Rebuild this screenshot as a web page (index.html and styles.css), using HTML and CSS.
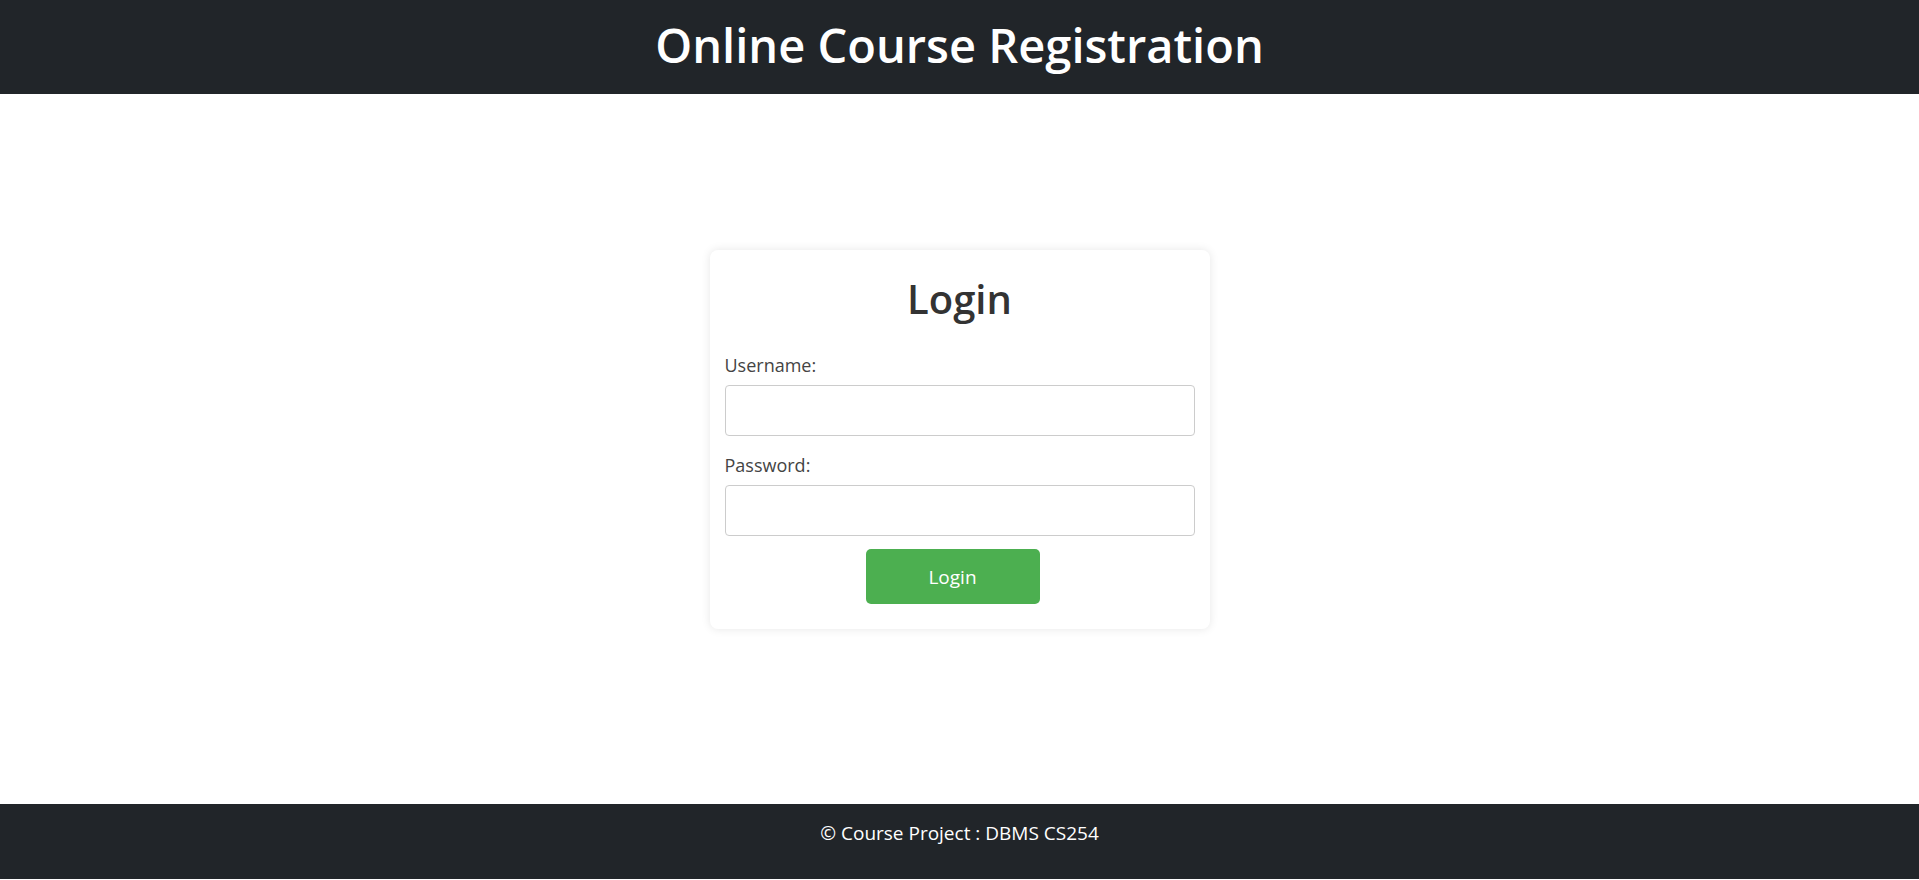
FILE: index.html
```html
<!DOCTYPE html>
<html lang="en">
<head>
<meta charset="utf-8">
<title>Online Course Registration</title>
<link rel="stylesheet" href="styles.css">
</head>
<body>
<header class="site-header">
  <h1 class="site-title">Online Course Registration</h1>
</header>
<main class="main">
  <div class="card">
    <h2 class="card-title">Login</h2>
    <form class="login-form">
      <label class="field-label" for="username">Username:</label>
      <input class="field-input" type="text" id="username" name="username">
      <label class="field-label" for="password">Password:</label>
      <input class="field-input field-input-last" type="password" id="password" name="password">
      <div class="actions">
        <button class="btn-login" type="button">Login</button>
      </div>
    </form>
  </div>
</main>
<footer class="site-footer">
  <p class="footer-text">&copy; Course Project : DBMS CS254</p>
</footer>
</body>
</html>
```

FILE: styles.css
```css
* { box-sizing: border-box; }

html, body {
  margin: 0;
  padding: 0;
}

body {
  font-family: "Segoe UI", "Open Sans", "Noto Sans", sans-serif;
  background: #ffffff;
  color: #333333;
  min-height: 880px;
  display: flex;
  flex-direction: column;
  padding-bottom: 1px;
}

.site-header {
  background: #212529;
  height: 94px;
  display: flex;
  align-items: center;
  justify-content: center;
  padding-bottom: 4px;
}

.site-title {
  margin: 0;
  color: #ffffff;
  font-size: 47px;
  font-weight: 600;
  line-height: 60px;
}

.main {
  flex: 1;
  display: flex;
  justify-content: center;
  align-items: flex-start;
  padding-top: 156px;
}

.card {
  width: 500px;
  background: #ffffff;
  border-radius: 8px;
  box-shadow: 0 0 10px rgba(0, 0, 0, 0.1);
  padding: 15px;
}

.card-title {
  margin: 10px 0 30px;
  text-align: center;
  font-size: 40px;
  line-height: 48px;
  font-weight: 600;
  color: #333333;
}

.login-form {
  display: block;
}

.field-label {
  display: block;
  font-size: 18px;
  line-height: 24px;
  color: #444444;
  margin-bottom: 8px;
}

.field-input {
  display: block;
  width: 100%;
  height: 51px;
  border: 1px solid #cccccc;
  border-radius: 4px;
  padding: 8px 10px;
  font-size: 16px;
  margin: 0 0 17px;
}

.field-input-last {
  margin-bottom: 13px;
}

.actions {
  padding-left: 141px;
  margin-bottom: 10px;
}

.btn-login {
  display: block;
  width: 174px;
  height: 55px;
  border: none;
  border-radius: 5px;
  background: #4caf50;
  color: #ffffff;
  font-family: inherit;
  font-size: 19px;
  cursor: pointer;
}

.site-footer {
  background: #212529;
  height: 75px;
  display: flex;
  justify-content: center;
}

.footer-text {
  margin: 0;
  padding-top: 17px;
  color: #ffffff;
  font-size: 19px;
  line-height: 24px;
}
```
